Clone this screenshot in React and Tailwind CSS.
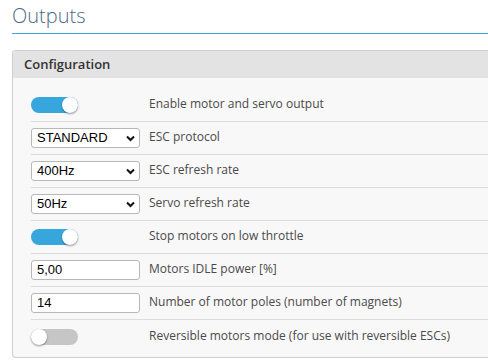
const ROWS = [
  { kind: "toggle", on: true, label: "Enable motor and servo output" },
  { kind: "select", value: "STANDARD", label: "ESC protocol" },
  { kind: "select", value: "400Hz", label: "ESC refresh rate" },
  { kind: "select", value: "50Hz", label: "Servo refresh rate" },
  { kind: "toggle", on: true, label: "Stop motors on low throttle" },
  { kind: "input", value: "5,00", label: "Motors IDLE power [%]" },
  { kind: "input", value: "14", label: "Number of motor poles (number of magnets)" },
  { kind: "toggle", on: false, label: "Reversible motors mode (for use with reversible ESCs)" },
];

function Toggle({ on }) {
  return (
    <div
      className={`relative h-[16px] w-[47px] rounded-full ${on ? "bg-[#37a6dc]" : "bg-[#c6c6c6]"}`}
    >
      <div
        className={`absolute top-0 size-[16px] rounded-full bg-white shadow-[0_1px_2px_rgba(0,0,0,0.4)] ${
          on ? "right-0" : "left-0"
        }`}
      />
    </div>
  );
}

function Chevron() {
  return (
    <svg width="9" height="7" viewBox="0 0 9 7" className="absolute right-[4px] top-[6px]">
      <path d="M1 1.5 L4.5 5 L8 1.5" fill="none" stroke="#111" strokeWidth="2" />
    </svg>
  );
}

function Control({ row }) {
  if (row.kind === "toggle") return <Toggle on={row.on} />;
  const box =
    "relative flex h-[20px] w-[109px] items-center rounded-[3px] border border-[#b8b8b8] bg-white px-[5px] font-['Liberation_Sans',Arial,sans-serif] text-[13px] text-black";
  if (row.kind === "select")
    return (
      <div className={box}>
        <span>{row.value}</span>
        <Chevron />
      </div>
    );
  return (
    <div className={box}>
      <span>{row.value}</span>
    </div>
  );
}

export default function App() {
  return (
    <div className="h-[364px] w-[488px] overflow-hidden bg-white pl-[12px] font-['Open_Sans',sans-serif]">
      <h1 className="h-[34px] border-b border-[#3fa5d8] pt-[2px] text-[20px] font-light leading-[28px] text-[#4d6a84]">
        Outputs
      </h1>
      <div className="mt-[16px] w-[490px] rounded-l-[4px] border-y border-l border-[#cfcfcf] bg-[#f8f8f8]">
        <div className="flex h-[27px] items-center rounded-tl-[4px] bg-[#e3e3e3] pl-[11px] text-[13px] font-semibold text-[#333]">
          Configuration
        </div>
        <div className="pb-[4px] pl-[18px] pt-[11px]">
          {ROWS.map((row, i) => (
            <div
              key={i}
              className={`flex h-[33px] items-center ${i < ROWS.length - 1 ? "border-b border-[#dcdcdc]" : ""}`}
            >
              <div className="w-[118px] shrink-0">
                <Control row={row} />
              </div>
              <span className="-mt-[2px] text-[12px] text-[#4a4a4a]">{row.label}</span>
            </div>
          ))}
        </div>
      </div>
    </div>
  );
}
